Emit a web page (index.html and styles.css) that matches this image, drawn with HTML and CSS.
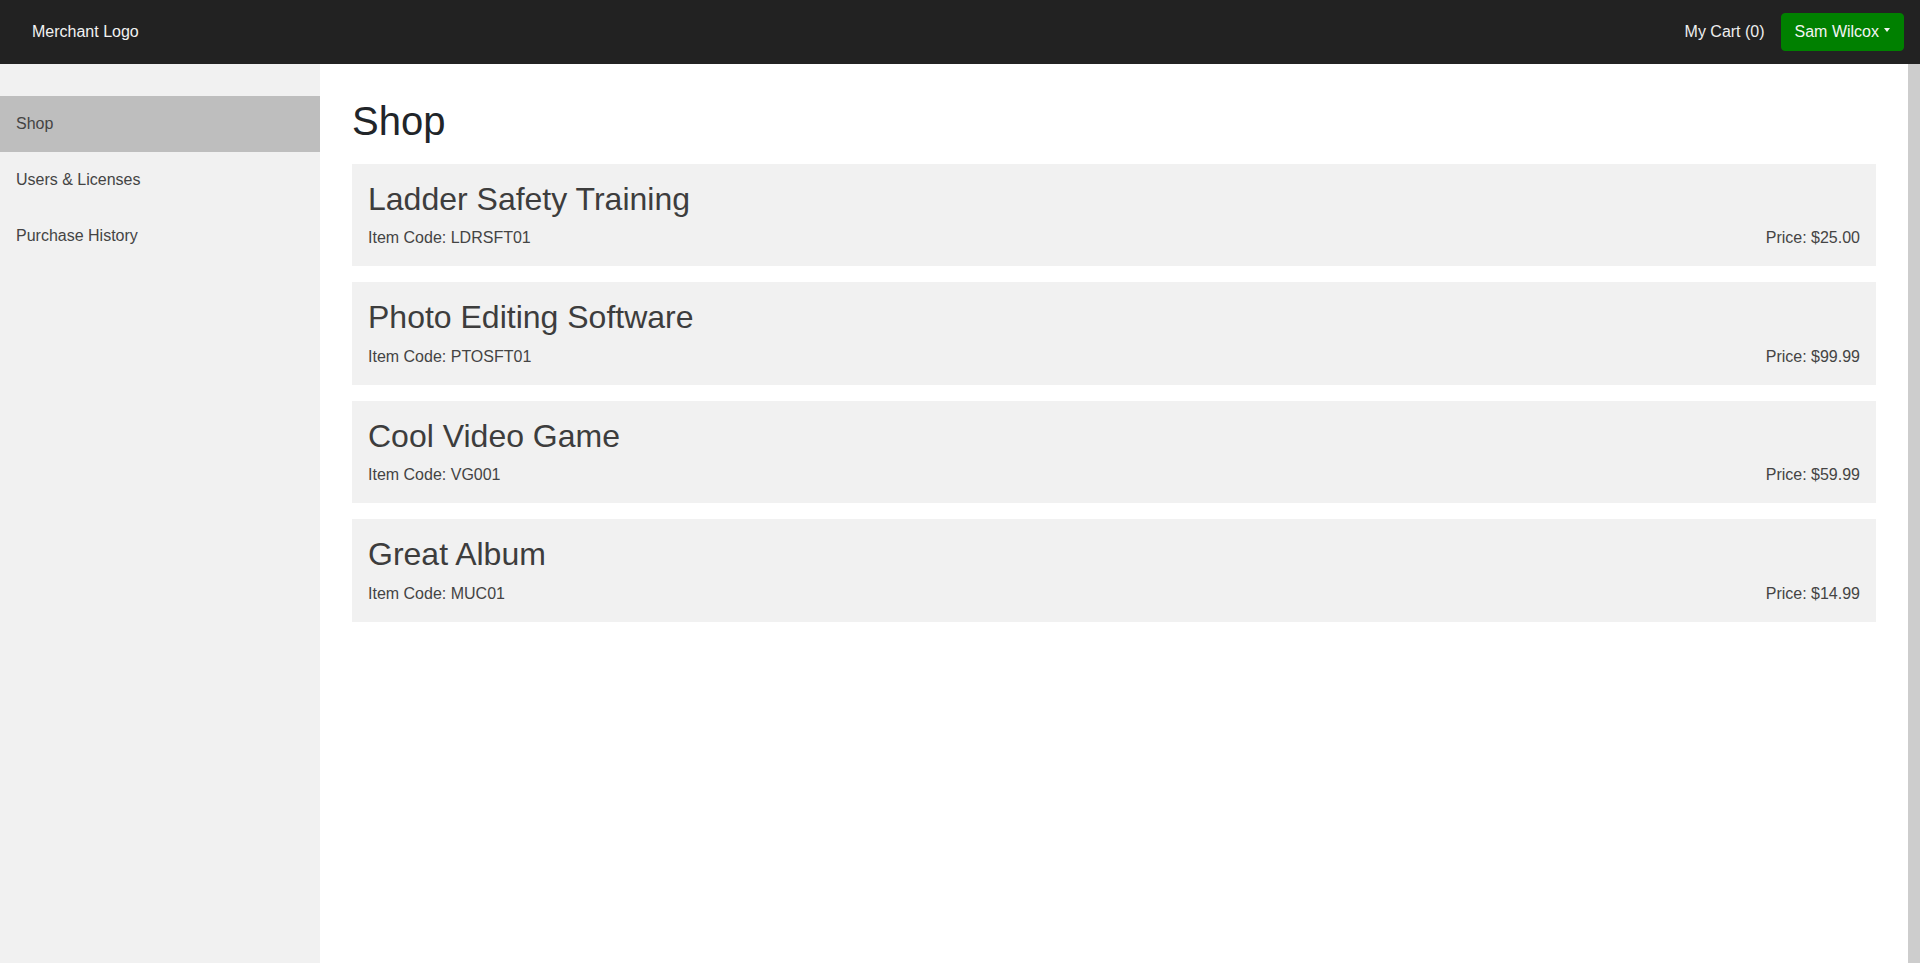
FILE: index.html
```html
<!DOCTYPE html>
<html lang="en">
<head>
<meta charset="utf-8">
<title>Shop</title>
<link rel="stylesheet" href="styles.css">
</head>
<body>
<header class="navbar">
  <div class="brand">Merchant Logo</div>
  <div class="nav-right">
    <span class="cart">My Cart (0)</span>
    <button class="user-btn">Sam Wilcox<span class="caret"></span></button>
  </div>
</header>
<div class="layout">
  <nav class="sidebar">
    <a class="side-item active">Shop</a>
    <a class="side-item">Users &amp; Licenses</a>
    <a class="side-item">Purchase History</a>
  </nav>
  <main class="content">
    <h1 class="page-title">Shop</h1>
    <div class="products">
      <div class="product">
        <h2 class="product-name">Ladder Safety Training</h2>
        <div class="product-meta"><span>Item Code: LDRSFT01</span><span>Price: $25.00</span></div>
      </div>
      <div class="product">
        <h2 class="product-name">Photo Editing Software</h2>
        <div class="product-meta"><span>Item Code: PTOSFT01</span><span>Price: $99.99</span></div>
      </div>
      <div class="product">
        <h2 class="product-name">Cool Video Game</h2>
        <div class="product-meta"><span>Item Code: VG001</span><span>Price: $59.99</span></div>
      </div>
      <div class="product">
        <h2 class="product-name">Great Album</h2>
        <div class="product-meta"><span>Item Code: MUC01</span><span>Price: $14.99</span></div>
      </div>
    </div>
  </main>
  <div class="scroll-strip"></div>
</div>
</body>
</html>
```

FILE: styles.css
```css
* { box-sizing: border-box; }
html, body {
  margin: 0;
  height: 100%;
  overflow: hidden;
}
body {
  font-family: "Liberation Sans", Arial, sans-serif;
  font-size: 16px;
  line-height: 1.5;
  color: #212529;
  background: #fff;
  display: flex;
  flex-direction: column;
}
.navbar {
  height: 64px;
  flex: none;
  background: #222222;
  display: flex;
  align-items: center;
  justify-content: space-between;
  padding: 0 16px 0 32px;
}
.brand {
  color: #f2f2f2;
  font-size: 16px;
}
.nav-right {
  display: flex;
  align-items: center;
  gap: 16px;
}
.cart {
  color: #eeeeee;
  font-size: 16px;
}
.user-btn {
  font-family: inherit;
  font-size: 16px;
  line-height: 24px;
  color: #f4f4f4;
  background: #008000;
  border: 1px solid #008000;
  border-radius: 4px;
  padding: 6px 13px 6px 13px;
  display: flex;
  align-items: center;
  cursor: pointer;
}
.caret {
  display: inline-block;
  margin-left: 5px;
  margin-top: -4px;
  width: 0;
  height: 0;
  border-top: 4px solid #f4f4f4;
  border-left: 3.5px solid transparent;
  border-right: 3.5px solid transparent;
}
.layout {
  flex: 1;
  display: flex;
  min-height: 0;
}
.sidebar {
  width: 320px;
  flex: none;
  background: #f1f1f1;
  padding-top: 32px;
  display: flex;
  flex-direction: column;
}
.side-item {
  display: block;
  height: 56px;
  padding: 16px;
  color: #444444;
  font-size: 16px;
  line-height: 24px;
  text-decoration: none;
}
.side-item.active {
  background: #bebebe;
}
.content {
  flex: 1;
  padding: 32px 32px 0 32px;
  min-width: 0;
}
.page-title {
  margin: 1px 0 19px 0;
  font-size: 40px;
  font-weight: 400;
  line-height: 48px;
  color: #212529;
}
.products {
  display: flex;
  flex-direction: column;
  gap: 16px;
}
.product {
  background: #f1f1f1;
  padding: 16px;
  color: #404040;
}
.product-name {
  margin: 0 0 8px 0;
  font-size: 32px;
  font-weight: 400;
  line-height: 38.4px;
  color: #3d3d3d;
}
.product-meta {
  display: flex;
  justify-content: space-between;
  font-size: 16px;
  line-height: 24px;
  color: #444444;
}
.scroll-strip {
  width: 12px;
  flex: none;
  background: #cdcdcd;
}
```
